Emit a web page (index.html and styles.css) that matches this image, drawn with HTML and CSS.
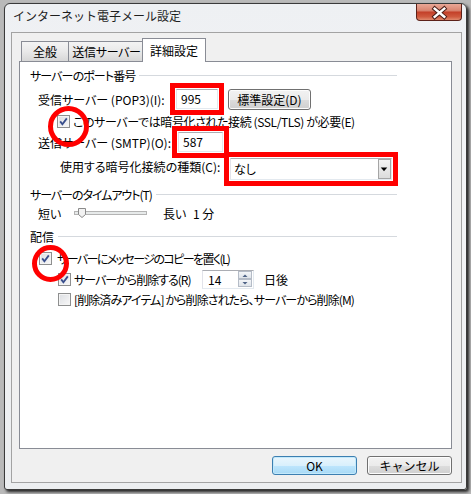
FILE: index.html
```html
<!DOCTYPE html>
<html lang="ja">
<head>
<meta charset="utf-8">
<title>インターネット電子メール設定</title>
<link rel="stylesheet" href="styles.css">
</head>
<body>
<div class="window">
  <div class="titlebar">
    <span class="title">インターネット電子メール設定</span>
    <div class="close">
      <svg width="46" height="17" viewBox="0 0 46 17">
        <path d="M18.5 4.5 L28.5 13 M28.5 4.5 L18.5 13" stroke="#4a1d16" stroke-width="4.6" stroke-linecap="square"/>
        <path d="M18.5 4.5 L28.5 13 M28.5 4.5 L18.5 13" stroke="#ffffff" stroke-width="2.6" stroke-linecap="square"/>
      </svg>
    </div>
  </div>
  <div class="client">
    <div class="tabs">
      <div class="tab t1">全般</div>
      <div class="tab t2">送信サーバー</div>
      <div class="tab active">詳細設定</div>
    </div>
    <div class="panel">
      <div class="group-head h1"><span class="ls-h1">サーバーのポート番号</span><i></i></div>
      <div class="row r-pop">
        <span class="label">受信サーバー (POP3)(I):</span>
        <div class="textbox mark-a">995</div>
        <div class="btn std">標準設定(D)</div>
      </div>
      <div class="row r-ssl">
        <span class="cbwrap circ-a"><span class="cb"><svg width="11" height="11" viewBox="0 0 11 11"><path d="M2.2 5.4 L4.4 8.2 L8.8 2.4" stroke="#384e8c" stroke-width="1.8" fill="none"/></svg></span></span>
        <span class="cbtext ls-ssl">このサーバーでは暗号化された接続 (SSL/TLS) が必要(E)</span>
      </div>
      <div class="row r-smtp">
        <span class="label">送信サーバー (SMTP)(O):</span>
        <div class="textbox mark-b">587</div>
      </div>
      <div class="row r-enc">
        <span class="label2">使用する暗号化接続の種類(C):</span>
        <div class="select mark-c">
          <span class="seltext">なし</span>
          <span class="selbtn"><svg width="13" height="20" viewBox="0 0 13 20"><path d="M3 8.5 H10 L6.5 12.5 Z" fill="#000"/></svg></span>
        </div>
      </div>
      <div class="group-head h2"><span class="ls-h2">サーバーのタイムアウト(T)</span><i></i></div>
      <div class="row r-slider">
        <span class="short">短い</span>
        <svg class="slider" width="74" height="14" viewBox="0 0 74 14">
          <rect x="0.5" y="5.5" width="72" height="3" fill="#e7eaea" stroke="#b4b4b4"/>
          <path d="M4.5 2.5 H11.5 V8.5 L8 11.5 L4.5 8.5 Z" fill="#f2f2f2" stroke="#8a8a8a"/>
        </svg>
        <span class="long">長い</span>
        <span class="mins">1 分</span>
      </div>
      <div class="group-head h3"><span>配信</span><i></i></div>
      <div class="row r-d1">
        <span class="cbwrap circ-b"><span class="cb"><svg width="11" height="11" viewBox="0 0 11 11"><path d="M2.2 5.4 L4.4 8.2 L8.8 2.4" stroke="#384e8c" stroke-width="1.8" fill="none"/></svg></span></span>
        <span class="cbtext ls-d1">サーバーにメッセージのコピーを置く(L)</span>
      </div>
      <div class="row r-d2">
        <span class="cb"><svg width="11" height="11" viewBox="0 0 11 11"><path d="M2.2 5.4 L4.4 8.2 L8.8 2.4" stroke="#384e8c" stroke-width="1.8" fill="none"/></svg></span>
        <span class="cbtext r2text">サーバーから削除する(R)</span>
        <div class="spin">
          <span class="spintext">14</span>
          <span class="spinbtns">
            <span class="sb"><svg width="12" height="7" viewBox="0 0 12 7"><path d="M3.5 5 L6 2.5 L8.5 5 Z" fill="#4d6185"/></svg></span>
            <span class="sb"><svg width="12" height="7" viewBox="0 0 12 7"><path d="M3.5 2 L6 4.5 L8.5 2 Z" fill="#4d6185"/></svg></span>
          </span>
        </div>
        <span class="days">日後</span>
      </div>
      <div class="row r-d3">
        <span class="cb"></span>
        <span class="cbtext ls-d3">[削除済みアイテム] から削除されたら、サーバーから削除(M)</span>
      </div>
    </div>
    <div class="buttons">
      <div class="btn dlg ok">OK</div>
      <div class="btn dlg">キャンセル</div>
    </div>
  </div>
</div>
</body>
</html>
```

FILE: styles.css
```css
* { box-sizing: border-box; }
html, body { margin: 0; padding: 0; }
body {
  width: 471px;
  height: 494px;
  overflow: hidden;
  background: #b9b9b9;
  font-family: "Noto Sans CJK JP", "Noto Sans", sans-serif;
  font-size: 12px;
  color: #000;
  white-space: nowrap;
}
.window {
  margin: 3px 0 0 4px;
  width: 463px;
  height: 487px;
  border: 1px solid #3a3a3a;
  border-radius: 6px 6px 3px 3px;
  background: linear-gradient(#eef0f3, #f3f4f6 40%, #eceef0);
  padding: 0 4px 0 6px;
  box-shadow: 2px 2px 3px rgba(0,0,0,0.8);
  display: flex;
  flex-direction: column;
}
.titlebar {
  height: 28px;
  display: flex;
  justify-content: space-between;
  align-items: flex-start;
  flex: none;
}
.title {
  margin: 3px 0 0 2px;
  line-height: 18px;
  font-size: 12px;
  color: #1e1e1e;
}
.close {
  width: 46px;
  height: 17px;
  border: 1px solid #5c2119;
  border-top: none;
  border-radius: 0 0 4px 4px;
  background: linear-gradient(#e9a796, #d98672 40%, #c4412a 52%, #cf5a3f 80%, #e08a6e);
  display: flex;
}
.close svg { display: block; }
.client {
  height: 451px;
  flex: none;
  border: 1px solid #a3a3a3;
  background: #f0f0f0;
  padding: 5px 9px 0 7px;
  display: flex;
  flex-direction: column;
}
.tabs {
  height: 23px;
  display: flex;
  align-items: flex-end;
  padding-left: 2px;
  position: relative;
  z-index: 1;
  flex: none;
}
.tab {
  height: 20px;
  border: 1px solid #898c95;
  border-bottom: none;
  background: linear-gradient(#f4f4f4, #e9e9e9 50%, #d7d7d7);
  display: flex;
  align-items: center;
  justify-content: center;
  font-feature-settings: "palt";
}
.t1 { width: 48px; }
.t2 { width: 77px; margin-left: -1px; letter-spacing: -0.3px; }
.tab.active {
  width: 64px;
  height: 24px;
  margin-left: -3px;
  margin-bottom: -1px;
  background: #fff;
  padding-bottom: 1px;
}
.panel {
  height: 388px;
  flex: none;
  border: 1px solid #898c95;
  background: #fff;
  padding: 4px 54px 0 10px;
  font-feature-settings: "palt";
}
.group-head {
  height: 18px;
  display: flex;
  align-items: center;
}
.group-head i {
  flex: 1;
  height: 0;
  border-top: 1px solid #d5d9de;
  margin-left: 4px;
  margin-top: 1px;
}
.h2 { margin-top: 7px; }
.h3 { margin-top: 4px; }
.row {
  display: flex;
  align-items: center;
}
.r-pop { height: 24px; margin-top: 3px; }
.r-ssl { height: 20px; }
.r-smtp { height: 22px; }
.r-enc { height: 24px; margin-top: 1px; }
.r-slider { height: 20px; }
.r-d1 { height: 22px; margin-top: 2px; }
.r-d2 { height: 20px; }
.r-d3 { height: 20px; }

.ls-h1 { letter-spacing: -0.9px; }
.ls-h2 { letter-spacing: -1.05px; }
.ls-ssl { letter-spacing: -0.4px; }
.ls-d1 { letter-spacing: -1.6px; }
.ls-d3 { letter-spacing: -0.9px; }

.label { width: 146px; padding-left: 8px; flex: none; }
.r-smtp .label { width: 148px; }
.label2 { width: 200px; padding-left: 30px; flex: none; }

.textbox {
  width: 42px;
  height: 20px;
  border: 1px solid #abadb3;
  border-color: #abadb3 #e3e9ef #e3e9ef #e2e3ea;
  background: #fff;
  padding-left: 4px;
  line-height: 18px;
}
.mark-b { width: 45px; }
.mark-a { outline: 5px solid #ff0000; outline-offset: 1px; }
.mark-b { outline: 5px solid #ff0000; outline-offset: 1px; }
.mark-c { outline: 5px solid #ff0000; outline-offset: 1px; }

.btn {
  border: 1px solid #707070;
  border-radius: 3px;
  background: linear-gradient(#f2f2f2, #ebebeb 50%, #dddddd 51%, #cfcfcf);
  display: flex;
  align-items: center;
  justify-content: center;
  box-shadow: inset 0 0 0 1px #fcfcfc;
}
.std { width: 83px; height: 21px; margin-left: 10px; }

.cbwrap { position: relative; display: flex; }
.cb {
  width: 13px;
  height: 13px;
  border: 1px solid #8e8f8f;
  background: linear-gradient(135deg, #dcdee2, #f8f8f8);
  box-shadow: inset 0 0 0 1px #f4f4f4;
  display: flex;
  flex: none;
}
.cb svg { display: block; }
.circ-a::after, .circ-b::after {
  content: "";
  position: absolute;
  border: 5px solid #ff0000;
  border-radius: 50%;
}
.circ-a::after { width: 31px; height: 31px; left: -9px; top: -9px; }
.circ-b::after { width: 27px; height: 27px; left: -7px; top: -7px; }

.r-ssl .cbwrap { margin-left: 27px; }
.cbtext { margin-left: 3px; }
.r-d1 .cbwrap { margin-left: 9px; }
.r-d1 .cbtext { margin-left: 5px; }
.r-d2 .cb, .r-d3 .cb { margin-left: 28px; }
.r2text { width: 128px; letter-spacing: -1px; flex: none; }

.select {
  width: 162px;
  height: 22px;
  margin-top: 5px;
  border: 1px solid #abadb3;
  border-color: #abadb3 #e3e9ef #e3e9ef #e2e3ea;
  background: #fff;
  display: flex;
  align-items: center;
  justify-content: space-between;
  padding-left: 3px;
}
.selbtn {
  width: 13px;
  height: 20px;
  border: 1px solid #a5a5a5;
  background: linear-gradient(#f4f4f4, #dcdcdc);
  display: flex;
}
.selbtn svg { display: block; margin-left: -1px; margin-top: -1px; }

.short { margin-left: 8px; width: 36px; }
.slider { display: block; }
.long { margin-left: 15px; width: 30px; }

.spin {
  width: 52px;
  height: 19px;
  border: 1px solid #abadb3;
  border-color: #abadb3 #e3e9ef #e3e9ef #e2e3ea;
  background: #fff;
  display: flex;
  justify-content: space-between;
}
.spintext { padding-left: 5px; line-height: 17px; }
.spinbtns { display: flex; flex-direction: column; width: 14px; margin-right: 1px; }
.sb {
  height: 8px;
  border: 1px solid #b5bcc7;
  background: linear-gradient(#f3f5f8, #dfe4ea);
  display: flex;
  overflow: hidden;
}
.sb svg { display: block; }
.days { margin-left: 10px; }

.buttons {
  display: flex;
  justify-content: flex-end;
  gap: 10px;
  margin-top: 7px;
}
.dlg { width: 85px; height: 19px; }
.ok {
  border-color: #3c7fb1;
  background: linear-gradient(#eaf6fd, #d9f0fc 50%, #bee6fd 51%, #a7d9f5);
  box-shadow: inset 0 0 0 1px #c3e9fb;
}
```
